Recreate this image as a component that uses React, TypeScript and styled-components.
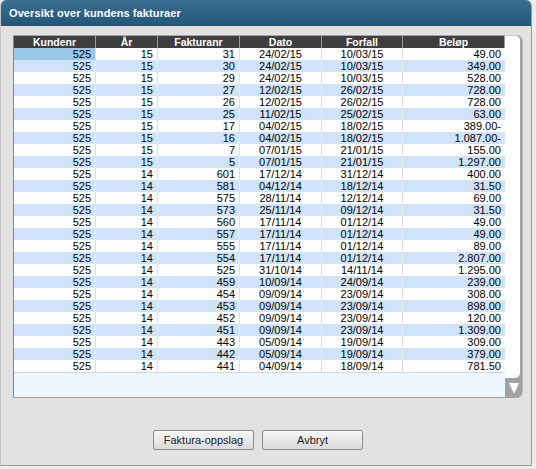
import React from "react";
import styled, { createGlobalStyle } from "styled-components";

const Global = createGlobalStyle`
  html, body { margin: 0; padding: 0; background: #ececec; }
  body { font-family: "Liberation Sans", Arial, sans-serif; }
`;

type Row = [string, string, string, string, string, string];

const rows: Row[] = [
  ["525", "15", "31", "24/02/15", "10/03/15", "49.00"],
  ["525", "15", "30", "24/02/15", "10/03/15", "349.00"],
  ["525", "15", "29", "24/02/15", "10/03/15", "528.00"],
  ["525", "15", "27", "12/02/15", "26/02/15", "728.00"],
  ["525", "15", "26", "12/02/15", "26/02/15", "728.00"],
  ["525", "15", "25", "11/02/15", "25/02/15", "63.00"],
  ["525", "15", "17", "04/02/15", "18/02/15", "389.00-"],
  ["525", "15", "16", "04/02/15", "18/02/15", "1.087.00-"],
  ["525", "15", "7", "07/01/15", "21/01/15", "155.00"],
  ["525", "15", "5", "07/01/15", "21/01/15", "1.297.00"],
  ["525", "14", "601", "17/12/14", "31/12/14", "400.00"],
  ["525", "14", "581", "04/12/14", "18/12/14", "31.50"],
  ["525", "14", "575", "28/11/14", "12/12/14", "69.00"],
  ["525", "14", "573", "25/11/14", "09/12/14", "31.50"],
  ["525", "14", "560", "17/11/14", "01/12/14", "49.00"],
  ["525", "14", "557", "17/11/14", "01/12/14", "49.00"],
  ["525", "14", "555", "17/11/14", "01/12/14", "89.00"],
  ["525", "14", "554", "17/11/14", "01/12/14", "2.807.00"],
  ["525", "14", "525", "31/10/14", "14/11/14", "1.295.00"],
  ["525", "14", "459", "10/09/14", "24/09/14", "239.00"],
  ["525", "14", "454", "09/09/14", "23/09/14", "308.00"],
  ["525", "14", "453", "09/09/14", "23/09/14", "898.00"],
  ["525", "14", "452", "09/09/14", "23/09/14", "120.00"],
  ["525", "14", "451", "09/09/14", "23/09/14", "1.309.00"],
  ["525", "14", "443", "05/09/14", "19/09/14", "309.00"],
  ["525", "14", "442", "05/09/14", "19/09/14", "379.00"],
  ["525", "14", "441", "04/09/14", "18/09/14", "781.50"],
];

const headers = ["Kundenr", "År", "Fakturanr", "Dato", "Forfall", "Beløp"];
const aligns: Array<"right" | "center"> = ["right", "right", "right", "center", "center", "right"];
const COLS = "82px 62px 82px 82px 81px 102px";

const Window = styled.div`
  width: 532px;
  height: 466px;
  display: flex;
  flex-direction: column;
  background: #e2e2e2;
  border-left: 1px solid #c4c4c4;
  border-right: 1px solid #9a9a9a;
  border-bottom: 1px solid #9a9a9a;
  border-radius: 6px 6px 0 0;
  overflow: hidden;
  box-sizing: border-box;
`;

const TitleBar = styled.div`
  height: 26px;
  flex: none;
  display: flex;
  align-items: center;
  padding-left: 8px;
  background: linear-gradient(180deg, #3b7093 0%, #2d6387 45%, #245677 100%);
  color: #fff;
  font-weight: bold;
  font-size: 11px;
  letter-spacing: 0.1px;
`;

const Body = styled.div`
  flex: 1;
  display: flex;
  flex-direction: column;
  padding: 9px 0 0 12px;
`;

const Panel = styled.div`
  width: 509px;
  height: 363px;
  display: flex;
  box-sizing: border-box;
  border: 1px solid #a6a6a6;
  border-left-color: #858585;
  border-right: none;
  border-radius: 0 6px 6px 0;
`;

const TableArea = styled.div`
  width: 491px;
  display: flex;
  flex-direction: column;
  background: #eef6fe;
`;

const Grid = styled.div`
  display: grid;
  grid-template-columns: ${COLS};
`;

const HeadCell = styled.div`
  height: 12px;
  line-height: 12px;
  background: #3e3e3e;
  color: #fff;
  font-weight: bold;
  font-size: 10.5px;
  text-align: center;
  box-sizing: border-box;
  border-right: 1px solid #9a9a9a;
  &:last-child { border-right: none; }
`;

const Cell = styled.div<{ $alt: boolean; $sel: boolean; $align: "right" | "center" }>`
  height: 12px;
  line-height: 12px;
  font-size: 11px;
  color: #000;
  white-space: nowrap;
  text-align: ${(p) => p.$align};
  padding: 0 ${(p) => (p.$align === "right" ? "4px" : "0")} 0 0;
  box-sizing: border-box;
  background: ${(p) => (p.$sel ? "#9ac9e8" : p.$alt ? "#cfe4fa" : "#ffffff")};
  border-right: 1px solid ${(p) => (p.$alt ? "#e6eef7" : "#dedede")};
  &:nth-child(6n) { border-right: none; }
`;

const Filler = styled.div`
  flex: 1;
  border-top: 1px solid #d6d6d6;
  background: #eef6fe;
`;

const ScrollCol = styled.div`
  width: 18px;
  display: flex;
  flex-direction: column;
  background: #a2a2a2;
  border-radius: 0 6px 6px 0;
  padding: 0 2px 0 0;
  box-sizing: border-box;
  margin-top: -1px;
  margin-bottom: -1px;
  box-shadow: 1px 0 0 #bdbdbd;
`;

const Track = styled.div`
  flex: 1;
  background: #fff;
  border-top: 1px solid #c8c8c8;
  border-radius: 0 5px 5px 0;
`;

const ArrowBtn = styled.div`
  height: 20px;
  display: flex;
  align-items: center;
  justify-content: center;
  padding-left: 2px;
`;

const ButtonRow = styled.div`
  display: flex;
  gap: 8px;
  padding: 32px 0 0 140px;
`;

const Button = styled.button`
  width: 101px;
  height: 20px;
  padding: 0;
  font-family: "Liberation Sans", Arial, sans-serif;
  font-size: 11px;
  color: #222;
  background: linear-gradient(180deg, #f7f7f7 0%, #e6e6e6 60%, #d9d9d9 100%);
  border: 1px solid #8a8a8a;
  border-radius: 2px;
`;

export default function App() {
  return (
    <>
      <Global />
      <Window>
        <TitleBar>Oversikt over kundens fakturaer</TitleBar>
        <Body>
          <Panel>
            <TableArea>
              <Grid>
                {headers.map((h) => (
                  <HeadCell key={h}>{h}</HeadCell>
                ))}
                {rows.map((r, i) =>
                  r.map((v, j) => (
                    <Cell
                      key={`${i}-${j}`}
                      $alt={i % 2 === 1}
                      $sel={i === 0 && j === 0}
                      $align={aligns[j]}
                    >
                      {v}
                    </Cell>
                  ))
                )}
              </Grid>
              <Filler />
            </TableArea>
            <ScrollCol>
              <Track />
              <ArrowBtn>
                <svg width="10" height="12" viewBox="0 0 10 12">
                  <path d="M0 1 L10 1 L5 12 Z" fill="#fff" />
                </svg>
              </ArrowBtn>
            </ScrollCol>
          </Panel>
          <ButtonRow>
            <Button>Faktura-oppslag</Button>
            <Button>Avbryt</Button>
          </ButtonRow>
        </Body>
      </Window>
    </>
  );
}
